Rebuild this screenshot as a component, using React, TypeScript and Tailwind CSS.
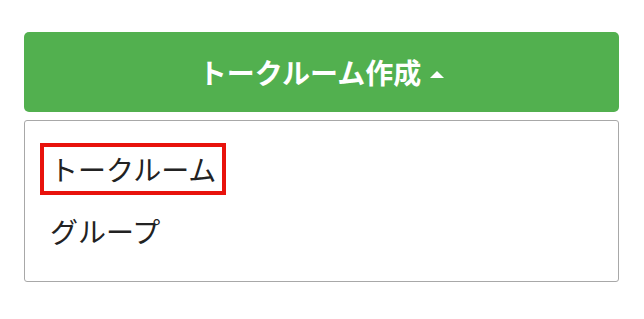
export default function App() {
  return (
    <div
      className="min-h-screen bg-white pt-8"
      style={{ fontFamily: '"Noto Sans CJK JP", "Noto Sans", sans-serif' }}
    >
      <div className="ml-6 mr-[25px]">
        {/* 作成ボタン */}
        <button
          type="button"
          className="flex h-[80px] w-full items-center justify-center gap-[9px] rounded-[5px] bg-[#52b04f] text-[28px] font-bold text-white"
        >
          <span className="leading-none">トークルーム作成</span>
          <svg
            className="mt-[4px] h-[7px] w-[14px]"
            viewBox="0 0 14 7"
            fill="currentColor"
          >
            <path d="M0 7 L7 0 L14 7 Z" />
          </svg>
        </button>

        {/* メニュー */}
        <div className="mt-2 rounded-[3px] border border-[#a8a8a8] pb-6 pl-[15px] pt-[22px] text-[28px] text-[#222]">
          <ul className="flex flex-col gap-[10px]">
            <li>
              <span className="inline-flex h-[52px] w-[186px] items-center border-4 border-[#e8120c] pl-[6px] leading-none">
                トークルーム
              </span>
            </li>
            <li>
              <span className="inline-flex h-[52px] items-center border-4 border-transparent pl-[6px] leading-none">
                グループ
              </span>
            </li>
          </ul>
        </div>
      </div>
    </div>
  );
}
